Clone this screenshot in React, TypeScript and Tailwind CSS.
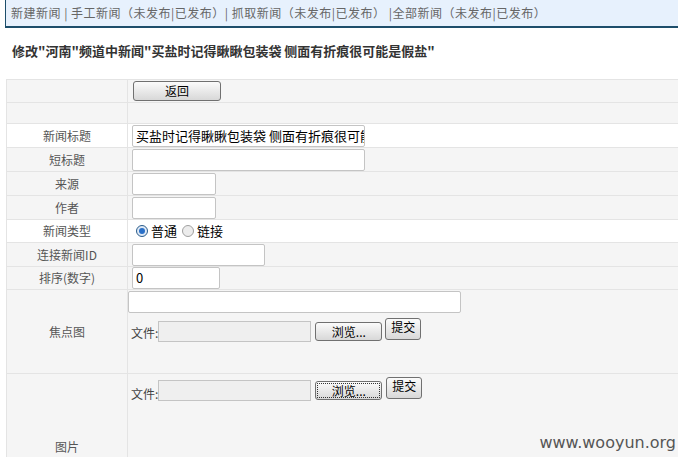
import React from "react";

const font = { fontFamily: '"Noto Sans CJK SC", "Noto Sans", sans-serif' };

function Btn({ children, className = "" }: { children: React.ReactNode; className?: string }) {
  return (
    <button
      className={
        "flex items-center justify-center rounded-[3px] border border-[#707070] bg-gradient-to-b from-[#fbfbfb] to-[#d8d8d8] text-[12px] leading-none text-black " +
        className
      }
    >
      {children}
    </button>
  );
}

function Radio({ checked }: { checked?: boolean }) {
  return (
    <span
      className={
        "flex h-[12px] w-[12px] items-center justify-center rounded-full border " +
        (checked ? "border-[#2b5d8c] bg-[#dfe9f5]" : "border-[#a0a0a0] bg-[#ececec]")
      }
    >
      {checked && <span className="h-[6px] w-[6px] rounded-full bg-[#2a70c8]" />}
    </span>
  );
}

function Row({
  label,
  h,
  gray = true,
  children,
}: {
  label: string;
  h: string;
  gray?: boolean;
  children?: React.ReactNode;
}) {
  return (
    <div className={"grid grid-cols-[121px_1fr] border-b border-[#e4e4e4] " + h + (gray ? " bg-[#f5f5f5]" : " bg-white")}>
      <div className="flex items-center justify-center border-r border-[#e4e4e4] text-[12px] text-[#555]">{label}</div>
      <div className="flex items-center pl-[4px]">{children}</div>
    </div>
  );
}

const inputCls = "h-[22px] border border-[#c4c4c4] bg-white px-[3px] text-[13px] text-black rounded-[2px]";

export default function App() {
  return (
    <div className="relative h-[457px] w-[678px] overflow-hidden bg-white" style={font}>
      <div className="ml-[5px] flex h-[28px] items-center border-b-2 border-l border-b-[#1d4e6b] border-l-[#1d4e6b] bg-[#e7f1fd] pl-[5px] text-[12px] tracking-[0.5px] text-[#666] whitespace-nowrap">
        新建新闻 | 手工新闻（未发布|已发布）| 抓取新闻（未发布|已发布） |全部新闻（未发布|已发布）
      </div>

      <div className="flex h-[51px] items-center px-[12px] pb-[5px] text-[13px] font-bold text-[#333] whitespace-nowrap">
        修改"河南"频道中新闻"买盐时记得瞅瞅包装袋 侧面有折痕很可能是假盐"
      </div>

      <div className="ml-[6px] w-[700px] border-l border-t border-[#e4e4e4]">
        <Row label="" h="h-[23px]">
          <Btn className="h-[20px] w-[88px] ml-[1px]">返回</Btn>
        </Row>
        <Row label="" h="h-[21px]" />
        <Row label="新闻标题" h="h-[24px]" gray={false}>
          <div className={inputCls + " w-[233px] overflow-hidden"}>
            <div className="flex h-full w-[300px] items-center whitespace-nowrap">买盐时记得瞅瞅包装袋 侧面有折痕很可能是假盐</div>
          </div>
        </Row>
        <Row label="短标题" h="h-[24px]">
          <div className={inputCls + " w-[233px]"} />
        </Row>
        <Row label="来源" h="h-[24px]">
          <div className={inputCls + " w-[84px]"} />
        </Row>
        <Row label="作者" h="h-[24px]">
          <div className={inputCls + " w-[84px]"} />
        </Row>
        <Row label="新闻类型" h="h-[23px]" gray={false}>
          <div className="flex items-center gap-[3px] pl-[4px] text-[13px] text-black">
            <Radio checked />
            <span className="mr-[2px]">普通</span>
            <Radio />
            <span>链接</span>
          </div>
        </Row>
        <Row label="连接新闻ID" h="h-[24px]">
          <div className={inputCls + " w-[133px]"} />
        </Row>
        <Row label="排序(数字)" h="h-[23px]">
          <div className={inputCls + " flex w-[88px] items-center text-[12px]"}>0</div>
        </Row>
        <div className="grid h-[84px] grid-cols-[121px_1fr] border-b border-[#e4e4e4] bg-[#f5f5f5]">
          <div className="flex items-center justify-center border-r border-[#e4e4e4] text-[12px] text-[#555]">焦点图</div>
          <div className="flex flex-col pt-[1px]">
            <div className="h-[22px] w-[333px] border border-[#c4c4c4] bg-white rounded-[2px]" />
            <div className="mt-[5px] flex items-start pl-[3px] text-[12px] text-[#444]">
              <span className="mt-[6px]">文件:</span>
              <div className="mt-[3px] h-[21px] w-[153px] border border-[#c4c4c4] bg-[#efefef]" />
              <Btn className="ml-[4px] mt-[4px] h-[19px] w-[67px]">浏览...</Btn>
              <Btn className="ml-[3px] h-[22px] w-[36px] items-start pt-[2px]">提交</Btn>
            </div>
          </div>
        </div>
        <div className="grid h-[100px] grid-cols-[121px_1fr] bg-[#f5f5f5]">
          <div className="flex items-end justify-center border-r border-[#e4e4e4] pb-[18px] text-[12px] text-[#555]">图片</div>
          <div className="flex items-start pl-[3px] pt-[3px] text-[12px] text-[#444]">
            <span className="mt-[8px]">文件:</span>
            <div className="mt-[3px] h-[21px] w-[153px] border border-[#c4c4c4] bg-[#efefef]" />
            <Btn className="ml-[4px] mt-[4px] h-[19px] w-[67px] border-[#3c7fb1] outline-dotted outline-1 -outline-offset-3 outline-[#333]">浏览...</Btn>
            <Btn className="ml-[4px] h-[22px] w-[36px] items-start pt-[2px] border-[#3c7fb1] from-[#eaf6fd] to-[#bee6fd]">提交</Btn>
          </div>
        </div>
      </div>

      <div
        className="absolute bottom-[2px] right-[2px] text-[16px] text-[#555]"
        style={{ fontFamily: '"DejaVu Sans", sans-serif' }}
      >
        www.wooyun.org
      </div>
    </div>
  );
}
